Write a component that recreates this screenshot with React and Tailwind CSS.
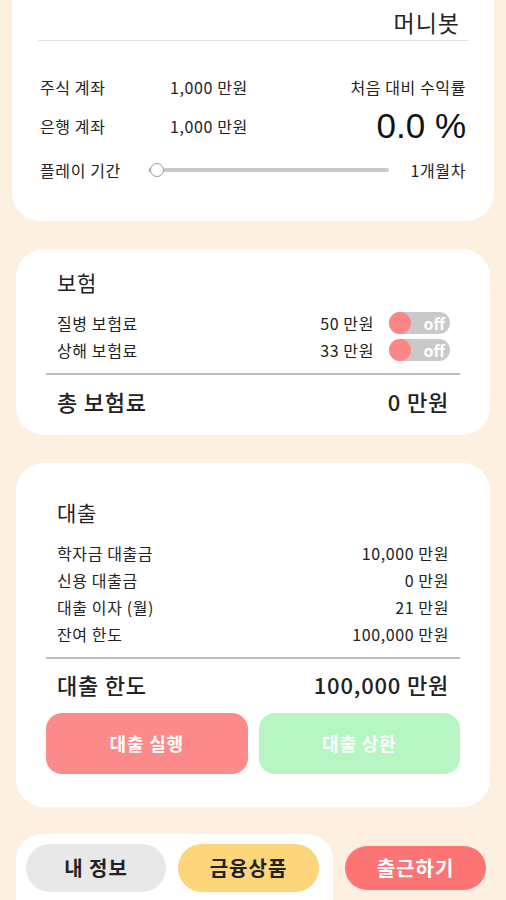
import React from "react";

const font = {
  fontFamily: '"Noto Sans CJK KR", "Noto Sans", sans-serif',
};

function Toggle() {
  return (
    <div className="relative flex h-[22px] w-[61px] items-center rounded-full bg-[#c9c9c9]">
      <div className="h-[22px] w-[22px] rounded-full bg-[#fc8686]" />
      <span className="ml-auto mr-[5px] text-[16px] font-bold leading-none tracking-normal text-white">
        off
      </span>
    </div>
  );
}

function Row({ label, value, children }) {
  return (
    <div className="flex h-[27px] items-center text-[16px] tracking-[0.6px] text-[#222]">
      <span>{label}</span>
      <span className="ml-auto">{value}</span>
      {children}
    </div>
  );
}

export default function App() {
  return (
    <div
      className="h-[900px] w-[506px] overflow-hidden bg-[#fdf0e1]"
      style={font}
    >
      {/* Top summary card */}
      <div className="mx-[12px] rounded-b-[28px] bg-white px-[26px] pb-[41px] pt-[8px]">
        <div className="flex justify-end pr-[8px] text-[23px] leading-[28px] tracking-[1px] text-[#222]">
          머니봇
        </div>
        <div className="mt-[4px] h-px bg-[#e2e2e2]" />

        <div className="mt-[34px] grid h-[24px] grid-cols-[132px_1fr_auto] items-center text-[16px] tracking-[0.6px] text-[#222]">
          <span className="pl-[2px]">주식 계좌</span>
          <span>1,000 만원</span>
          <span className="pr-[2px] text-right">처음 대비 수익률</span>
        </div>
        <div className="mt-[9px] grid h-[36px] grid-cols-[132px_1fr_auto] items-center text-[16px] tracking-[0.6px] text-[#222]">
          <span className="pl-[2px]">은행 계좌</span>
          <span>1,000 만원</span>
          <span
            className="pr-[2px] text-[35px] leading-[36px] tracking-normal text-[#111]"
            style={{ fontFamily: '"Liberation Sans", Arial, sans-serif' }}
          >
            0.0 %
          </span>
        </div>
        <div className="mt-[16px] flex h-[20px] items-center text-[16px] tracking-[0.6px] text-[#222]">
          <span className="w-[110px] pl-[2px]">플레이 기간</span>
          <div className="relative mr-[22px] flex h-[16px] flex-1 items-center">
            <div className="h-[4px] w-full rounded-full bg-[#c9c9c9]" />
            <div className="absolute left-[1px] top-1/2 h-[4px] w-[6px] -translate-y-1/2 rounded-full bg-[#f2c230]" />
            <div className="absolute left-[2px] top-1/2 h-[14px] w-[14px] -translate-y-1/2 rounded-full border-[1.5px] border-[#9a9a9a] bg-white" />
          </div>
          <span className="pr-[2px]">1개월차</span>
        </div>
      </div>

      {/* Insurance card */}
      <div className="mx-[16px] mt-[28px] rounded-[28px] bg-white px-[30px] pb-[20px] pt-[19px]">
        <div className="pl-[11px] text-[21px] leading-[28px] tracking-[0.8px] text-[#222]">
          보험
        </div>
        <div className="mt-[13px] px-[11px]">
          <Row label="질병 보험료" value="50 만원">
            <div className="ml-[15px] mr-[-1px]">
              <Toggle />
            </div>
          </Row>
          <Row label="상해 보험료" value="33 만원">
            <div className="ml-[15px] mr-[-1px]">
              <Toggle />
            </div>
          </Row>
        </div>
        <div className="mt-[10px] h-[2px] bg-[#bdbdbd]" />
        <div className="mt-[12px] flex items-center px-[11px] text-[22px] font-medium leading-[28px] tracking-[0.8px] text-[#222]">
          <span>총 보험료</span>
          <span className="ml-auto">0 만원</span>
        </div>
      </div>

      {/* Loan card */}
      <div className="mx-[16px] mt-[28px] rounded-[28px] bg-white px-[30px] pb-[33px] pt-[35px]">
        <div className="pl-[11px] text-[21px] leading-[28px] tracking-[0.8px] text-[#222]">
          대출
        </div>
        <div className="mt-[13px] px-[11px]">
          <Row label="학자금 대출금" value="10,000 만원" />
          <Row label="신용 대출금" value="0 만원" />
          <Row label="대출 이자 (월)" value="21 만원" />
          <Row label="잔여 한도" value="100,000 만원" />
        </div>
        <div className="mt-[10px] h-[2px] bg-[#bdbdbd]" />
        <div className="mt-[11px] flex items-center px-[11px] text-[22px] font-medium leading-[28px] tracking-[0.8px] text-[#222]">
          <span>대출 한도</span>
          <span className="ml-auto">100,000 만원</span>
        </div>
        <div className="mt-[15px] grid grid-cols-2 gap-[11px]">
          <button className="h-[61px] rounded-[16px] bg-[#fd8a8a] text-[18px] font-bold tracking-[0.8px] text-white">
            대출 실행
          </button>
          <button className="h-[61px] rounded-[16px] bg-[#b7f5c3] text-[18px] font-bold tracking-[0.8px] text-white">
            대출 상환
          </button>
        </div>
      </div>

      {/* Bottom navigation */}
      <div className="mt-[27px] flex items-start">
        <div className="ml-[16px] flex h-[70px] w-[317px] gap-[12px] rounded-t-[26px] bg-white px-[10px] pt-[10px]">
          <button className="h-[48px] w-[140px] rounded-full bg-[#e8e8e8] text-[20px] font-bold tracking-[1px] text-[#222]">
            내 정보
          </button>
          <button className="h-[48px] w-[141px] rounded-full bg-[#fdd57b] text-[20px] font-bold tracking-[1px] text-[#222]">
            금융상품
          </button>
        </div>
        <button className="ml-[12px] mt-[12px] h-[44px] w-[141px] rounded-full bg-[#fc7474] text-[20px] font-bold tracking-[1px] text-white">
          출근하기
        </button>
      </div>
    </div>
  );
}
